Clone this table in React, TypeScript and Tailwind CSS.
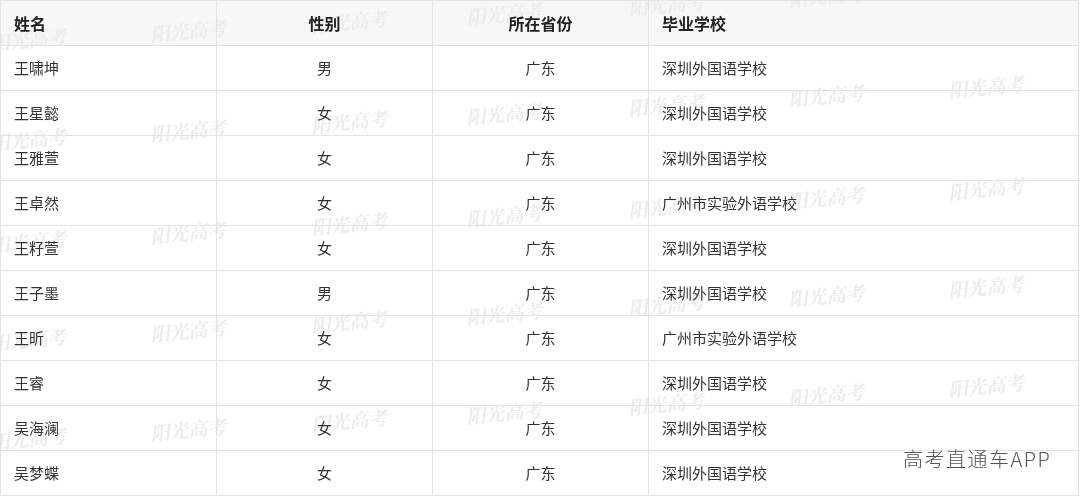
import React from 'react'

const ROWS = [
  { name: '王啸坤', gender: '男', province: '广东', school: '深圳外国语学校' },
  { name: '王星懿', gender: '女', province: '广东', school: '深圳外国语学校' },
  { name: '王雅萱', gender: '女', province: '广东', school: '深圳外国语学校' },
  { name: '王卓然', gender: '女', province: '广东', school: '广州市实验外语学校' },
  { name: '王籽萱', gender: '女', province: '广东', school: '深圳外国语学校' },
  { name: '王子墨', gender: '男', province: '广东', school: '深圳外国语学校' },
  { name: '王昕', gender: '女', province: '广东', school: '广州市实验外语学校' },
  { name: '王睿', gender: '女', province: '广东', school: '深圳外国语学校' },
  { name: '吴海澜', gender: '女', province: '广东', school: '深圳外国语学校' },
  { name: '吴梦蝶', gender: '女', province: '广东', school: '深圳外国语学校' },
]

// watermark grid: columns across, bands down, tilted slightly upward to the right
const WM_X = [-8, 152, 313, 468, 630, 790, 950]
const WM_BANDS = [38, 138, 240, 338, 437]

const FONT = { fontFamily: '"Noto Sans CJK SC", "Noto Sans", sans-serif' }

export default function App() {
  const marks: { x: number; y: number }[] = []
  WM_BANDS.forEach(b => WM_X.forEach(x => marks.push({ x, y: b - Math.round(x * 0.056) })))

  return (
    <div className="relative w-[1080px] h-[497px] bg-white overflow-hidden text-[#333]" style={FONT}>
      <table className="w-[1079px] table-fixed border-collapse">
        <colgroup>
          <col className="w-[216px]" />
          <col className="w-[216px]" />
          <col className="w-[216px]" />
          <col />
        </colgroup>
        <thead>
          <tr className="h-[45px] bg-[#f7f7f7] text-[16px] text-[#222]">
            <th className="border border-[#e3e3e3] px-[13px] text-left font-bold">姓名</th>
            <th className="border border-[#e3e3e3] text-center font-bold">性别</th>
            <th className="border border-[#e3e3e3] text-center font-bold">所在省份</th>
            <th className="border border-[#e3e3e3] px-[13px] text-left font-bold">毕业学校</th>
          </tr>
        </thead>
        <tbody className="text-[15px]">
          {ROWS.map(r => (
            <tr key={r.name} className="h-[45px]">
              <td className="border border-[#e3e3e3] px-[13px]">{r.name}</td>
              <td className="border border-[#e3e3e3] text-center">{r.gender}</td>
              <td className="border border-[#e3e3e3] text-center">{r.province}</td>
              <td className="border border-[#e3e3e3] px-[13px]">{r.school}</td>
            </tr>
          ))}
        </tbody>
      </table>

      {/* faint watermarks laid over the table; darken blend keeps the text on top readable */}
      <div className="pointer-events-none absolute inset-0 mix-blend-darken">
        {marks.map((m, i) => (
          <span
            key={i}
            className="absolute -rotate-[5deg] -skew-x-12 text-[19px] font-bold text-[#ececec] whitespace-nowrap"
            style={{ left: m.x, top: m.y - 13, fontFamily: '"Noto Serif CJK SC", "Noto Sans CJK SC", serif' }}
          >
            阳光高考
          </span>
        ))}
      </div>

      <div className="pointer-events-none absolute left-[903px] top-[444px] text-[20px] font-light tracking-[1.5px] text-[#555] whitespace-nowrap">
        高考直通车APP
      </div>
    </div>
  )
}
